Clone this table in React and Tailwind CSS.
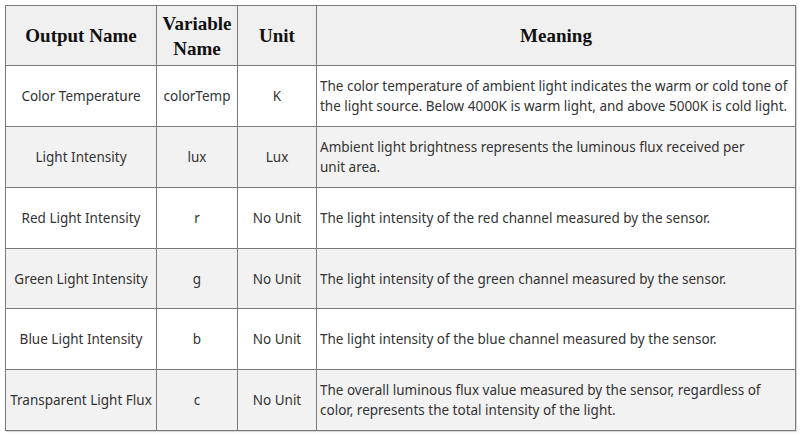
import React from 'react';

const rows = [
  { name: 'Color Temperature', variable: 'colorTemp', unit: 'K', meaning: ['The color temperature of ambient light indicates the warm or cold tone of', 'the light source. Below 4000K is warm light, and above 5000K is cold light.'] },
  { name: 'Light Intensity', variable: 'lux', unit: 'Lux', meaning: ['Ambient light brightness represents the luminous flux received per', 'unit area.'] },
  { name: 'Red Light Intensity', variable: 'r', unit: 'No Unit', meaning: ['The light intensity of the red channel measured by the sensor.'] },
  { name: 'Green Light Intensity', variable: 'g', unit: 'No Unit', meaning: ['The light intensity of the green channel measured by the sensor.'] },
  { name: 'Blue Light Intensity', variable: 'b', unit: 'No Unit', meaning: ['The light intensity of the blue channel measured by the sensor.'] },
  { name: 'Transparent Light Flux', variable: 'c', unit: 'No Unit', meaning: ['The overall luminous flux value measured by the sensor, regardless of', 'color, represents the total intensity of the light.'] },
];

const heights = ['h-[61px]', 'h-[61px]', 'h-[61px]', 'h-[60px]', 'h-[61px]', 'h-[61px]'];

export default function App() {
  return (
    <div className="w-[800px] h-[435px] bg-white pt-[5px] pl-[5px]">
      <table className="border-collapse table-fixed w-[790px] border border-[#7a7a7a] shadow-[1px_1px_1px_rgba(0,0,0,0.15)]">
        <colgroup>
          <col className="w-[151px]" />
          <col className="w-[81px]" />
          <col className="w-[79px]" />
          <col className="w-[479px]" />
        </colgroup>
        <thead>
          <tr className="h-[60px] bg-[#f0f0f0] font-['Liberation_Serif',serif] font-bold text-[19px] leading-[25px] text-[#111]">
            <th className="border border-[#7a7a7a] text-center">Output Name</th>
            <th className="border border-[#7a7a7a] text-center">Variable<br />Name</th>
            <th className="border border-[#7a7a7a] text-center">Unit</th>
            <th className="border border-[#7a7a7a] text-center">Meaning</th>
          </tr>
        </thead>
        <tbody className="font-['Noto_Sans',sans-serif] text-[13.5px] leading-[20px] text-[#333]">
          {rows.map((r, i) => (
            <tr key={r.name} className={`${heights[i]} ${i % 2 === 1 ? 'bg-[#f2f2f2]' : 'bg-white'}`}>
              <td className="border border-[#7a7a7a] text-center whitespace-nowrap">{r.name}</td>
              <td className="border border-[#7a7a7a] text-center">{r.variable}</td>
              <td className="border border-[#7a7a7a] text-center">{r.unit}</td>
              <td className="border border-[#7a7a7a] pl-[3px] whitespace-nowrap">
                {r.meaning.map((line) => (
                  <div key={line}>{line}</div>
                ))}
              </td>
            </tr>
          ))}
        </tbody>
      </table>
    </div>
  );
}
